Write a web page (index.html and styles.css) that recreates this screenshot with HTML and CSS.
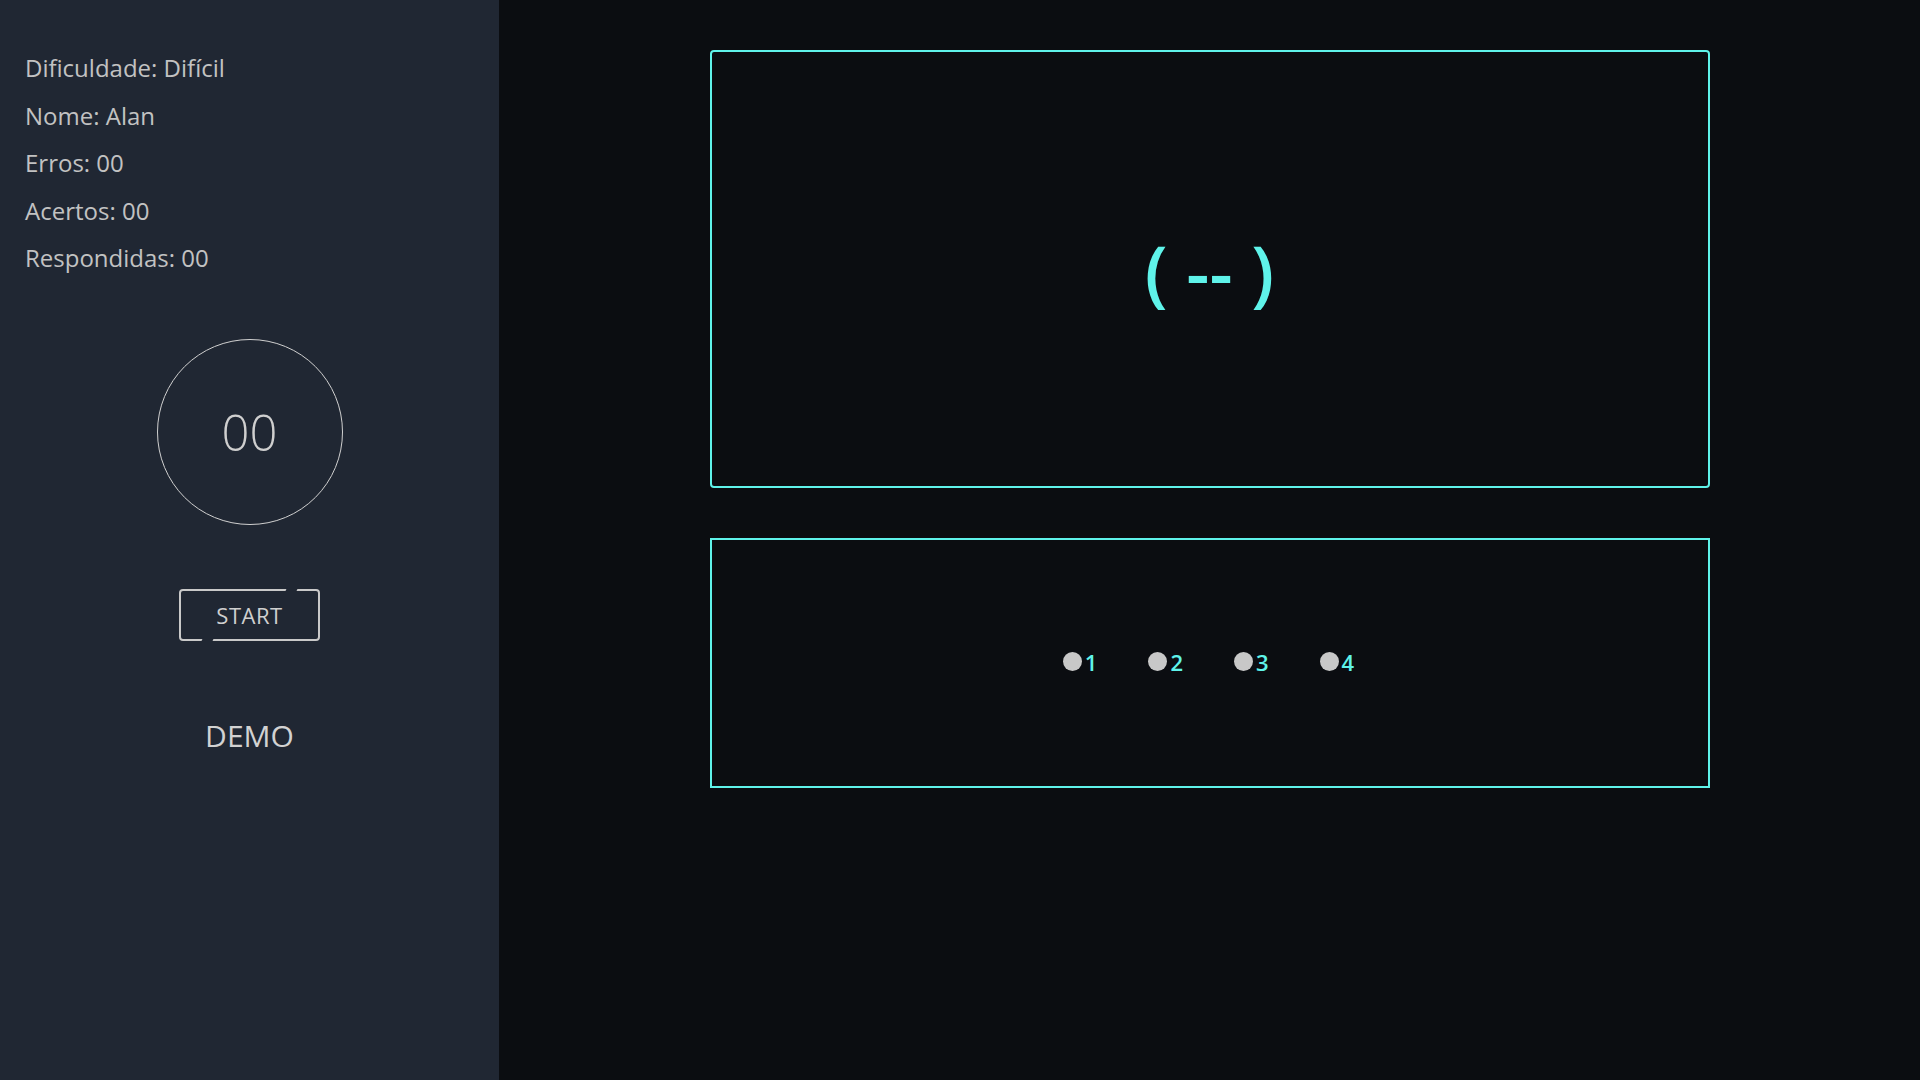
FILE: index.html
```html
<!DOCTYPE html>
<html lang="pt-BR">
<head>
<meta charset="utf-8">
<title>Quiz</title>
<link rel="stylesheet" href="styles.css">
</head>
<body>
<div class="app">
  <aside class="sidebar">
    <div class="stats">
      <p class="stat">Dificuldade: Difícil</p>
      <p class="stat">Nome: Alan</p>
      <p class="stat">Erros: 00</p>
      <p class="stat">Acertos: 00</p>
      <p class="stat">Respondidas: 00</p>
    </div>
    <div class="timer">00</div>
    <button class="start">START</button>
    <div class="demo">DEMO</div>
  </aside>
  <main class="main">
    <section class="question">( -- )</section>
    <section class="options">
      <label class="option"><span class="dot"></span><span class="num">1</span></label>
      <label class="option"><span class="dot"></span><span class="num">2</span></label>
      <label class="option"><span class="dot"></span><span class="num">3</span></label>
      <label class="option"><span class="dot"></span><span class="num">4</span></label>
    </section>
  </main>
</div>
</body>
</html>
```
FILE: styles.css
```css
* { box-sizing: border-box; }
html, body {
  margin: 0;
  padding: 0;
  height: 100%;
}
body {
  font-family: "Open Sans", "Noto Sans", sans-serif;
  background: #0b0d11;
}
.app {
  display: flex;
  height: 1080px;
}
.sidebar {
  width: 499px;
  flex: 0 0 499px;
  background: #202733;
  padding: 44px 25px 0 25px;
  display: flex;
  flex-direction: column;
  align-items: center;
  color: #c9c9c9;
}
.stats {
  align-self: stretch;
  display: flex;
  flex-direction: column;
}
.stat {
  margin: 0;
  font-size: 24px;
  font-weight: 400;
  line-height: 47.5px;
  color: #c2c2c2;
}
.timer {
  margin-top: 57px;
  width: 186px;
  height: 186px;
  border: 1.5px solid #d0d0d0;
  border-radius: 50%;
  display: flex;
  align-items: center;
  justify-content: center;
  font-size: 49px;
  font-weight: 300;
  color: #cfcfcf;
}
.start {
  position: relative;
  margin-top: 64px;
  width: 141px;
  height: 52px;
  background: transparent;
  border: 2px solid #c9c9c9;
  border-radius: 4px;
  font-family: "Open Sans", "Noto Sans", sans-serif;
  font-size: 22px;
  color: #cfcfcf;
  letter-spacing: 0.5px;
  padding: 0;
}
.start::before,
.start::after {
  content: "";
  position: absolute;
  width: 11px;
  height: 6px;
  background: #202733;
  transform: skewX(-25deg);
}
.start::before {
  top: -4px;
  right: 21px;
}
.start::after {
  bottom: -4px;
  left: 21px;
}
.demo {
  margin-top: 76px;
  font-size: 30px;
  color: #d2d2d2;
  line-height: 38px;
}
.main {
  flex: 1;
  display: flex;
  flex-direction: column;
  align-items: center;
  padding-top: 50px;
}
.question {
  width: 1000px;
  height: 438px;
  border: 2px solid #5ff3ea;
  border-radius: 4px;
  display: flex;
  align-items: center;
  justify-content: center;
  color: #5ff3ea;
  font-size: 72px;
  font-weight: 600;
  padding-top: 4px;
}
.options {
  margin-top: 50px;
  width: 1000px;
  height: 250px;
  border: 2px solid #5ff3ea;
  display: flex;
  align-items: center;
  justify-content: center;
  gap: 51px;
  padding-right: 2px;
}
.option {
  display: flex;
  align-items: center;
  gap: 3px;
}
.dot {
  width: 19px;
  height: 19px;
  border-radius: 50%;
  background: #c8c8c8;
  margin-top: 0;
  margin-bottom: 3px;
}
.num {
  color: #5ff3ea;
  font-size: 22px;
  font-weight: 600;
  line-height: 28px;
  margin-bottom: 2px;
}
```
